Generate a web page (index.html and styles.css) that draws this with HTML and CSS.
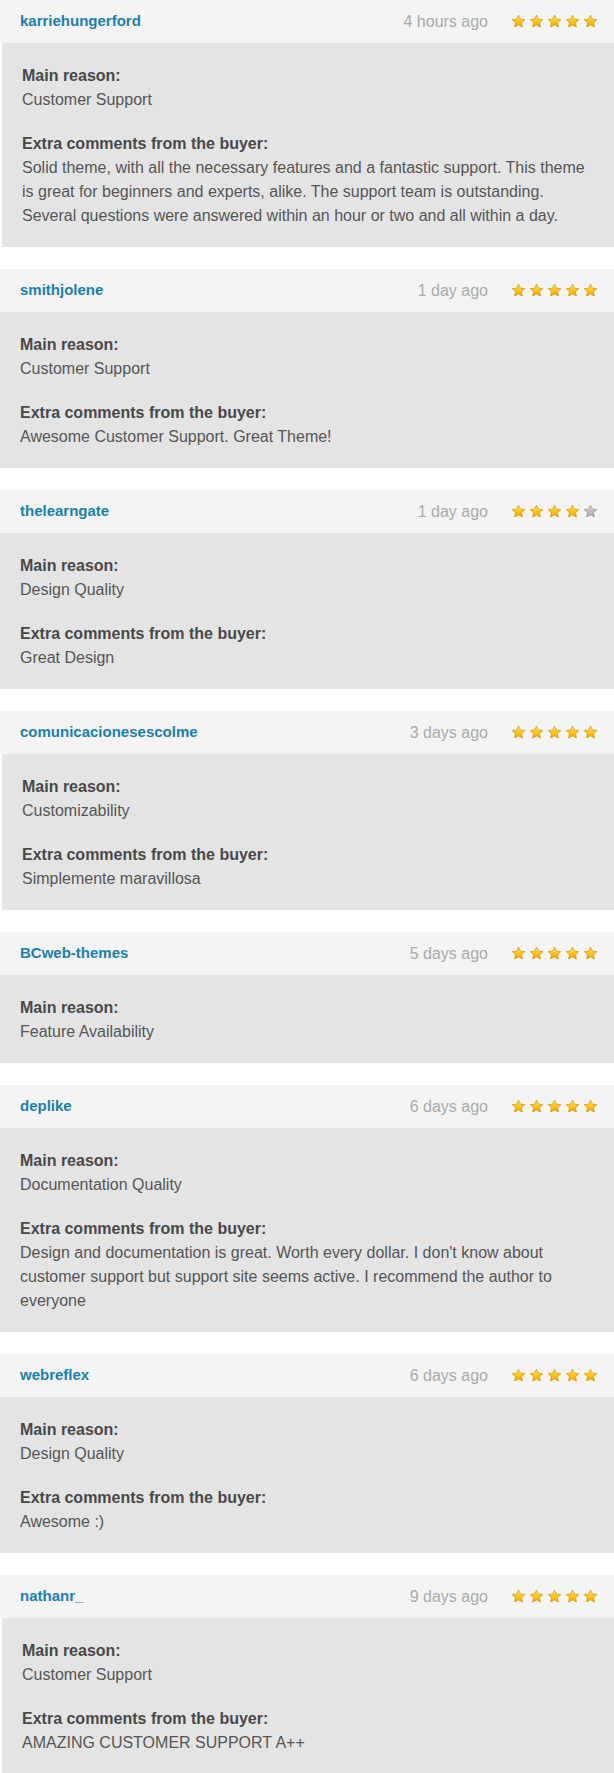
FILE: index.html
```html
<!DOCTYPE html>
<html lang="en">

<head>
    <meta charset="UTF-8">
    <meta name="viewport" content="width=device-width, initial-scale=1.0">
    <title>Buyer Reviews</title>
    <link rel="stylesheet" href="styles.css">
</head>

<body>
    <svg class="defs" width="0" height="0">
        <defs>
            <linearGradient id="gold" x1="0" y1="0" x2="0" y2="1">
                <stop offset="0" stop-color="#ffe680"/>
                <stop offset="0.5" stop-color="#ffc61a"/>
                <stop offset="1" stop-color="#f2a200"/>
            </linearGradient>
            <linearGradient id="grey" x1="0" y1="0" x2="0" y2="1">
                <stop offset="0" stop-color="#d8d8d8"/>
                <stop offset="1" stop-color="#a8a8a8"/>
            </linearGradient>
            <symbol id="star" viewBox="0 0 24 24">
                <path d="M12 1.8l3 6.4 7 .8-5.2 4.8 1.4 7L12 17.3l-6.2 3.5 1.4-7L2 9l7-.8z"/>
            </symbol>
        </defs>
    </svg>

    <div class="reviews">

        <div class="review shift">
            <div class="review-head">
                <a class="buyer" href="#">karriehungerford</a>
                <span class="time">4 hours ago</span>
                <span class="stars">
                    <svg class="star"><use href="#star"/></svg><svg class="star"><use href="#star"/></svg><svg class="star"><use href="#star"/></svg><svg class="star"><use href="#star"/></svg><svg class="star"><use href="#star"/></svg>
                </span>
            </div>
            <div class="review-body">
                <h4>Main reason:</h4>
                <p>Customer Support</p>
                <h4>Extra comments from the buyer:</h4>
                <p>Solid theme, with all the necessary features and a fantastic support. This theme is great for beginners and experts, alike. The support team is outstanding. Several questions were answered within an hour or two and all within a day.</p>
            </div>
        </div>

        <div class="review">
            <div class="review-head">
                <a class="buyer" href="#">smithjolene</a>
                <span class="time">1 day ago</span>
                <span class="stars">
                    <svg class="star"><use href="#star"/></svg><svg class="star"><use href="#star"/></svg><svg class="star"><use href="#star"/></svg><svg class="star"><use href="#star"/></svg><svg class="star"><use href="#star"/></svg>
                </span>
            </div>
            <div class="review-body">
                <h4>Main reason:</h4>
                <p>Customer Support</p>
                <h4>Extra comments from the buyer:</h4>
                <p>Awesome Customer Support. Great Theme!</p>
            </div>
        </div>

        <div class="review">
            <div class="review-head">
                <a class="buyer" href="#">thelearngate</a>
                <span class="time">1 day ago</span>
                <span class="stars">
                    <svg class="star"><use href="#star"/></svg><svg class="star"><use href="#star"/></svg><svg class="star"><use href="#star"/></svg><svg class="star"><use href="#star"/></svg><svg class="star off"><use href="#star"/></svg>
                </span>
            </div>
            <div class="review-body">
                <h4>Main reason:</h4>
                <p>Design Quality</p>
                <h4>Extra comments from the buyer:</h4>
                <p>Great Design</p>
            </div>
        </div>

        <div class="review shift">
            <div class="review-head">
                <a class="buyer" href="#">comunicacionesescolme</a>
                <span class="time">3 days ago</span>
                <span class="stars">
                    <svg class="star"><use href="#star"/></svg><svg class="star"><use href="#star"/></svg><svg class="star"><use href="#star"/></svg><svg class="star"><use href="#star"/></svg><svg class="star"><use href="#star"/></svg>
                </span>
            </div>
            <div class="review-body">
                <h4>Main reason:</h4>
                <p>Customizability</p>
                <h4>Extra comments from the buyer:</h4>
                <p>Simplemente maravillosa</p>
            </div>
        </div>

        <div class="review">
            <div class="review-head">
                <a class="buyer" href="#">BCweb-themes</a>
                <span class="time">5 days ago</span>
                <span class="stars">
                    <svg class="star"><use href="#star"/></svg><svg class="star"><use href="#star"/></svg><svg class="star"><use href="#star"/></svg><svg class="star"><use href="#star"/></svg><svg class="star"><use href="#star"/></svg>
                </span>
            </div>
            <div class="review-body">
                <h4>Main reason:</h4>
                <p>Feature Availability</p>
            </div>
        </div>

        <div class="review">
            <div class="review-head">
                <a class="buyer" href="#">deplike</a>
                <span class="time">6 days ago</span>
                <span class="stars">
                    <svg class="star"><use href="#star"/></svg><svg class="star"><use href="#star"/></svg><svg class="star"><use href="#star"/></svg><svg class="star"><use href="#star"/></svg><svg class="star"><use href="#star"/></svg>
                </span>
            </div>
            <div class="review-body">
                <h4>Main reason:</h4>
                <p>Documentation Quality</p>
                <h4>Extra comments from the buyer:</h4>
                <p>Design and documentation is great. Worth every dollar. I don't know about customer support but support site seems active. I recommend the author to everyone</p>
            </div>
        </div>

        <div class="review">
            <div class="review-head">
                <a class="buyer" href="#">webreflex</a>
                <span class="time">6 days ago</span>
                <span class="stars">
                    <svg class="star"><use href="#star"/></svg><svg class="star"><use href="#star"/></svg><svg class="star"><use href="#star"/></svg><svg class="star"><use href="#star"/></svg><svg class="star"><use href="#star"/></svg>
                </span>
            </div>
            <div class="review-body">
                <h4>Main reason:</h4>
                <p>Design Quality</p>
                <h4>Extra comments from the buyer:</h4>
                <p>Awesome :)</p>
            </div>
        </div>

        <div class="review shift">
            <div class="review-head">
                <a class="buyer" href="#">nathanr_</a>
                <span class="time">9 days ago</span>
                <span class="stars">
                    <svg class="star"><use href="#star"/></svg><svg class="star"><use href="#star"/></svg><svg class="star"><use href="#star"/></svg><svg class="star"><use href="#star"/></svg><svg class="star"><use href="#star"/></svg>
                </span>
            </div>
            <div class="review-body">
                <h4>Main reason:</h4>
                <p>Customer Support</p>
                <h4>Extra comments from the buyer:</h4>
                <p>AMAZING CUSTOMER SUPPORT A++</p>
            </div>
        </div>

    </div>
</body>

</html>
```

FILE: styles.css
```css
/* styles.css */
body {
    margin: 0;
    background-color: #fff;
    font-family: "Liberation Sans", Arial, sans-serif;
    color: #555;
}

.defs {
    position: absolute;
    width: 0;
    height: 0;
}

.reviews {
    display: flex;
    flex-direction: column;
    gap: 22px;
}

.review-head {
    display: flex;
    align-items: center;
    height: 43px;
    padding: 0 16px 0 20px;
    background-color: #f4f4f4;
}

.buyer {
    font-size: 15px;
    font-weight: bold;
    color: #1b7fab;
    text-decoration: none;
    margin-top: -3px;
}

.time {
    margin-left: auto;
    margin-right: 23px;
    font-size: 16px;
    color: #aaa;
}

.stars {
    display: flex;
    gap: 3px;
}

.star {
    width: 15px;
    height: 15px;
    fill: url(#gold);
    stroke: #d99a00;
    stroke-width: 1.3;
}

.star.off {
    fill: url(#grey);
    stroke: #999;
}

.review-body {
    padding: 21px 20px 19px 20px;
    background-color: #e4e4e4;
}

.shift .review-body {
    margin-left: 2px;
}

.review-body h4 {
    margin: 0;
    font-size: 16px;
    line-height: 24px;
    color: #484848;
}

.review-body p {
    margin: 0 0 20px 0;
    font-size: 16px;
    line-height: 24px;
}

.review-body p:last-child {
    margin-bottom: 0;
}
```
